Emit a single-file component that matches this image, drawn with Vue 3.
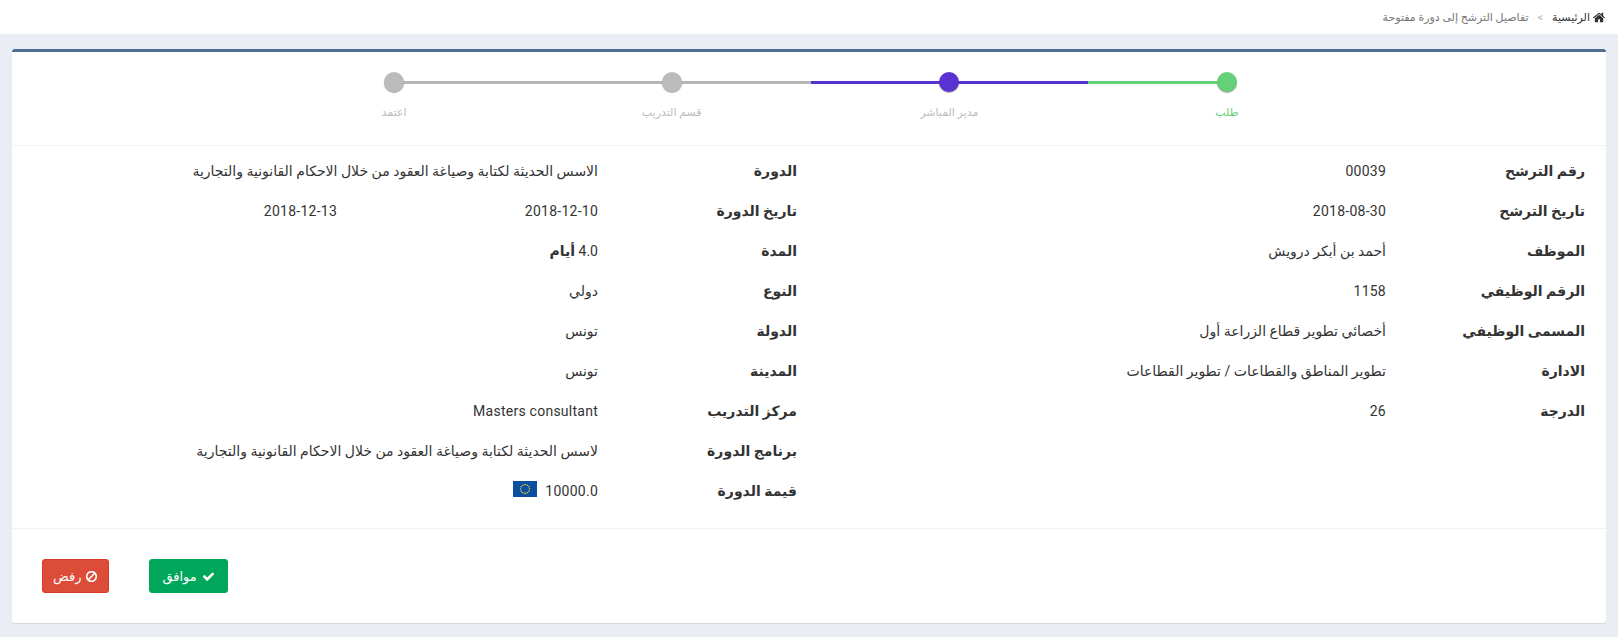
<template>
  <div class="page" dir="rtl" lang="ar">
    <div class="topbar">
      <svg class="home-icon" viewBox="0 0 1792 1792"><path :d="icons.home" /></svg>
      <span class="crumb-home">الرئيسية</span>
      <span class="crumb-sep">&gt;</span>
      <span class="crumb-current">تفاصيل الترشح إلى دورة مفتوحة</span>
    </div>

    <div class="card">
      <ul class="steps">
        <li v-for="step in steps" :key="step.label" class="step" :class="step.state">
          <span class="line"></span>
          <span class="dot"></span>
          <span class="step-label">{{ step.label }}</span>
        </li>
      </ul>

      <div class="info">
        <div class="col">
          <div v-for="row in employee" :key="row.label" class="row">
            <div class="label">{{ row.label }}</div>
            <div class="value">{{ row.value }}</div>
          </div>
        </div>

        <div class="col">
          <div class="row">
            <div class="label">الدورة</div>
            <div class="value">الاسس الحديثة لكتابة وصياغة العقود من خلال الاحكام القانونية والتجارية</div>
          </div>
          <div class="row">
            <div class="label">تاريخ الدورة</div>
            <div class="value dates">
              <span class="date">2018-12-10</span>
              <span class="date">2018-12-13</span>
            </div>
          </div>
          <div class="row">
            <div class="label">المدة</div>
            <div class="value">4.0 <b>أيام</b></div>
          </div>
          <div v-for="row in course" :key="row.label" class="row">
            <div class="label">{{ row.label }}</div>
            <div class="value">{{ row.value }}</div>
          </div>
          <div class="row">
            <div class="label">قيمة الدورة</div>
            <div class="value price">
              <span>10000.0</span>
              <svg class="flag" viewBox="0 0 24 16">
                <rect width="24" height="16" fill="#0b4ea2" />
                <circle
                  v-for="star in stars"
                  :key="star.x"
                  :cx="star.x"
                  :cy="star.y"
                  r="0.8"
                  fill="#e5cf2a"
                />
              </svg>
            </div>
          </div>
        </div>
      </div>

      <div class="actions">
        <button class="btn approve">
          <svg class="btn-icon" viewBox="0 0 1792 1792"><path :d="icons.check" /></svg>
          موافق
        </button>
        <button class="btn reject">
          <svg class="btn-icon" viewBox="0 0 1792 1792"><path :d="icons.ban" /></svg>
          رفض
        </button>
      </div>
    </div>
  </div>
</template>

<script setup>
const icons = {
  home: 'M1408 992v480q0 26-19 45t-45 19h-384v-384h-256v384h-384q-26 0-45-19t-19-45v-480q0-1 .5-3t.5-3l575-474 575 474q1 2 1 6zm223-69l-62 74q-8 9-21 11h-3q-13 0-21-7l-692-577-692 577q-12 8-24 7-13-2-21-11l-62-74q-8-10-7-23.5t11-21.5l719-599q32-26 76-26t76 26l244 204v-195q0-14 9-23t23-9h192q14 0 23 9t9 23v408l219 182q10 8 11 21.5t-7 23.5z',
  check: 'M1671 566q0 40-28 68l-724 724-136 136q-28 28-68 28t-68-28l-136-136-362-362q-28-28-28-68t28-68l136-136q28-28 68-28t68 28l294 295 656-657q28-28 68-28t68 28l136 136q28 28 28 68z',
  ban: 'M1440 893q0-161-87-295l-754 753q137 89 297 89 111 0 211.5-43.5t173.5-116.5 116-174.5 43-212.5zm-999 299l755-754q-135-91-300-91-148 0-273 73t-198 199-73 274q0 162 89 299zm1223-299q0 157-61 300t-163.5 246-245 164-298.5 61-298.5-61-245-164-163.5-246-61-300 61-299.5 163.5-245.5 245-164 298.5-61 298.5 61 245 164 163.5 245.5 61 299.5z',
};

const steps = [
  { label: 'طلب', state: 'done' },
  { label: 'مدير المباشر', state: 'current' },
  { label: 'قسم التدريب', state: 'todo' },
  { label: 'اعتمد', state: 'todo' },
];

const employee = [
  { label: 'رقم الترشح', value: '00039' },
  { label: 'تاريخ الترشح', value: '2018-08-30' },
  { label: 'الموظف', value: 'أحمد بن أبكر درويش' },
  { label: 'الرقم الوظيفي', value: '1158' },
  { label: 'المسمى الوظيفي', value: 'أخصائي تطوير قطاع الزراعة أول' },
  { label: 'الادارة', value: 'تطوير المناطق والقطاعات / تطوير القطاعات' },
  { label: 'الدرجة', value: '26' },
];

const course = [
  { label: 'النوع', value: 'دولي' },
  { label: 'الدولة', value: 'تونس' },
  { label: 'المدينة', value: 'تونس' },
  { label: 'مركز التدريب', value: 'Masters consultant' },
  { label: 'برنامج الدورة', value: 'لاسس الحديثة لكتابة وصياغة العقود من خلال الاحكام القانونية والتجارية' },
];

// twelve stars of the flag, on a ring
const stars = Array.from({ length: 12 }, (_, i) => {
  const angle = (i * Math.PI) / 6;
  return { x: 12 + 4.4 * Math.cos(angle), y: 8 + 4.4 * Math.sin(angle) };
});
</script>

<style>
html,
body {
  margin: 0;
  background: #eaeef4;
}
</style>

<style scoped>
.page {
  min-height: 637px;
  box-sizing: border-box;
  background: #eaeef4;
  font-family: Roboto, "DejaVu Sans", sans-serif;
  font-size: 13px;
  color: #333;
  padding-bottom: 14px;
}

.topbar {
  height: 34px;
  background: #fff;
  display: flex;
  align-items: center;
  padding: 0 12px;
  font-size: 11px;
  color: #777;
}

.home-icon {
  width: 13px;
  height: 13px;
  fill: #333;
  margin-left: 3px;
}

.crumb-home {
  color: #333;
}

.crumb-sep {
  margin: 0 9px;
  color: #bbb;
}

.card {
  margin: 15px 12px 0;
  background: #fff;
  border-top: 3px solid #4c6c94;
  border-radius: 3px;
  box-shadow: 0 1px 1px rgba(0, 0, 0, 0.1);
}

.steps {
  list-style: none;
  margin: 0;
  padding: 20px 0 0 3px;
  height: 73px;
  display: flex;
  justify-content: center;
  border-bottom: 1px solid #f1f2f4;
}

.step {
  position: relative;
  width: 277.6px;
  display: flex;
  flex-direction: column;
  align-items: center;
  color: #bbb;
}

.line {
  position: absolute;
  top: 9px;
  left: 0;
  right: 0;
  height: 3px;
  background: #b5b5b5;
}

.step:first-child .line {
  right: 50%;
}

.step:last-child .line {
  left: 50%;
}

.dot {
  position: relative;
  width: 20px;
  height: 20px;
  border-radius: 50%;
  background: #bbb;
  box-shadow: 0 1px 1px rgba(0, 0, 0, 0.35);
}

.step-label {
  margin-top: 12px;
  font-size: 11px;
  line-height: 18px;
}

.done .line,
.done .dot {
  background: #65d077;
}

.done .step-label {
  color: #65d077;
}

.current .line,
.current .dot {
  background: #5a32d2;
}

.info {
  display: grid;
  grid-template-columns: 1fr 1fr;
  padding: 5px 9px 17px;
  border-bottom: 1px solid #f1f2f4;
}

.col {
  padding: 0 12px;
}

.row {
  height: 40px;
  display: grid;
  grid-template-columns: 199px 1fr;
  align-items: center;
}

.label {
  font-size: 14px;
  font-weight: 700;
  color: #333;
}

.value {
  font-size: 14px;
  letter-spacing: 0.25px;
}

.value b {
  font-weight: 700;
}

.dates {
  display: flex;
}

.date {
  width: 261px;
}

.price {
  display: flex;
  align-items: center;
  gap: 8px;
}

.flag {
  width: 24px;
  height: 16px;
  margin-top: -5px;
}

.actions {
  display: flex;
  justify-content: flex-end;
  gap: 40px;
  padding: 30px;
}

.btn {
  height: 34px;
  padding: 0 12px;
  border: 1px solid;
  border-radius: 3px;
  display: flex;
  align-items: center;
  gap: 5px;
  color: #fff;
  font-family: inherit;
  font-size: 13px;
  cursor: pointer;
}

.btn-icon {
  width: 13px;
  height: 13px;
  fill: #fff;
}

.approve {
  background: #00a65a;
  border-color: #00a65a;
}

.reject {
  padding: 0 10px;
  gap: 4px;
  background: #dd4b39;
  border-color: #d73925;
}
</style>
